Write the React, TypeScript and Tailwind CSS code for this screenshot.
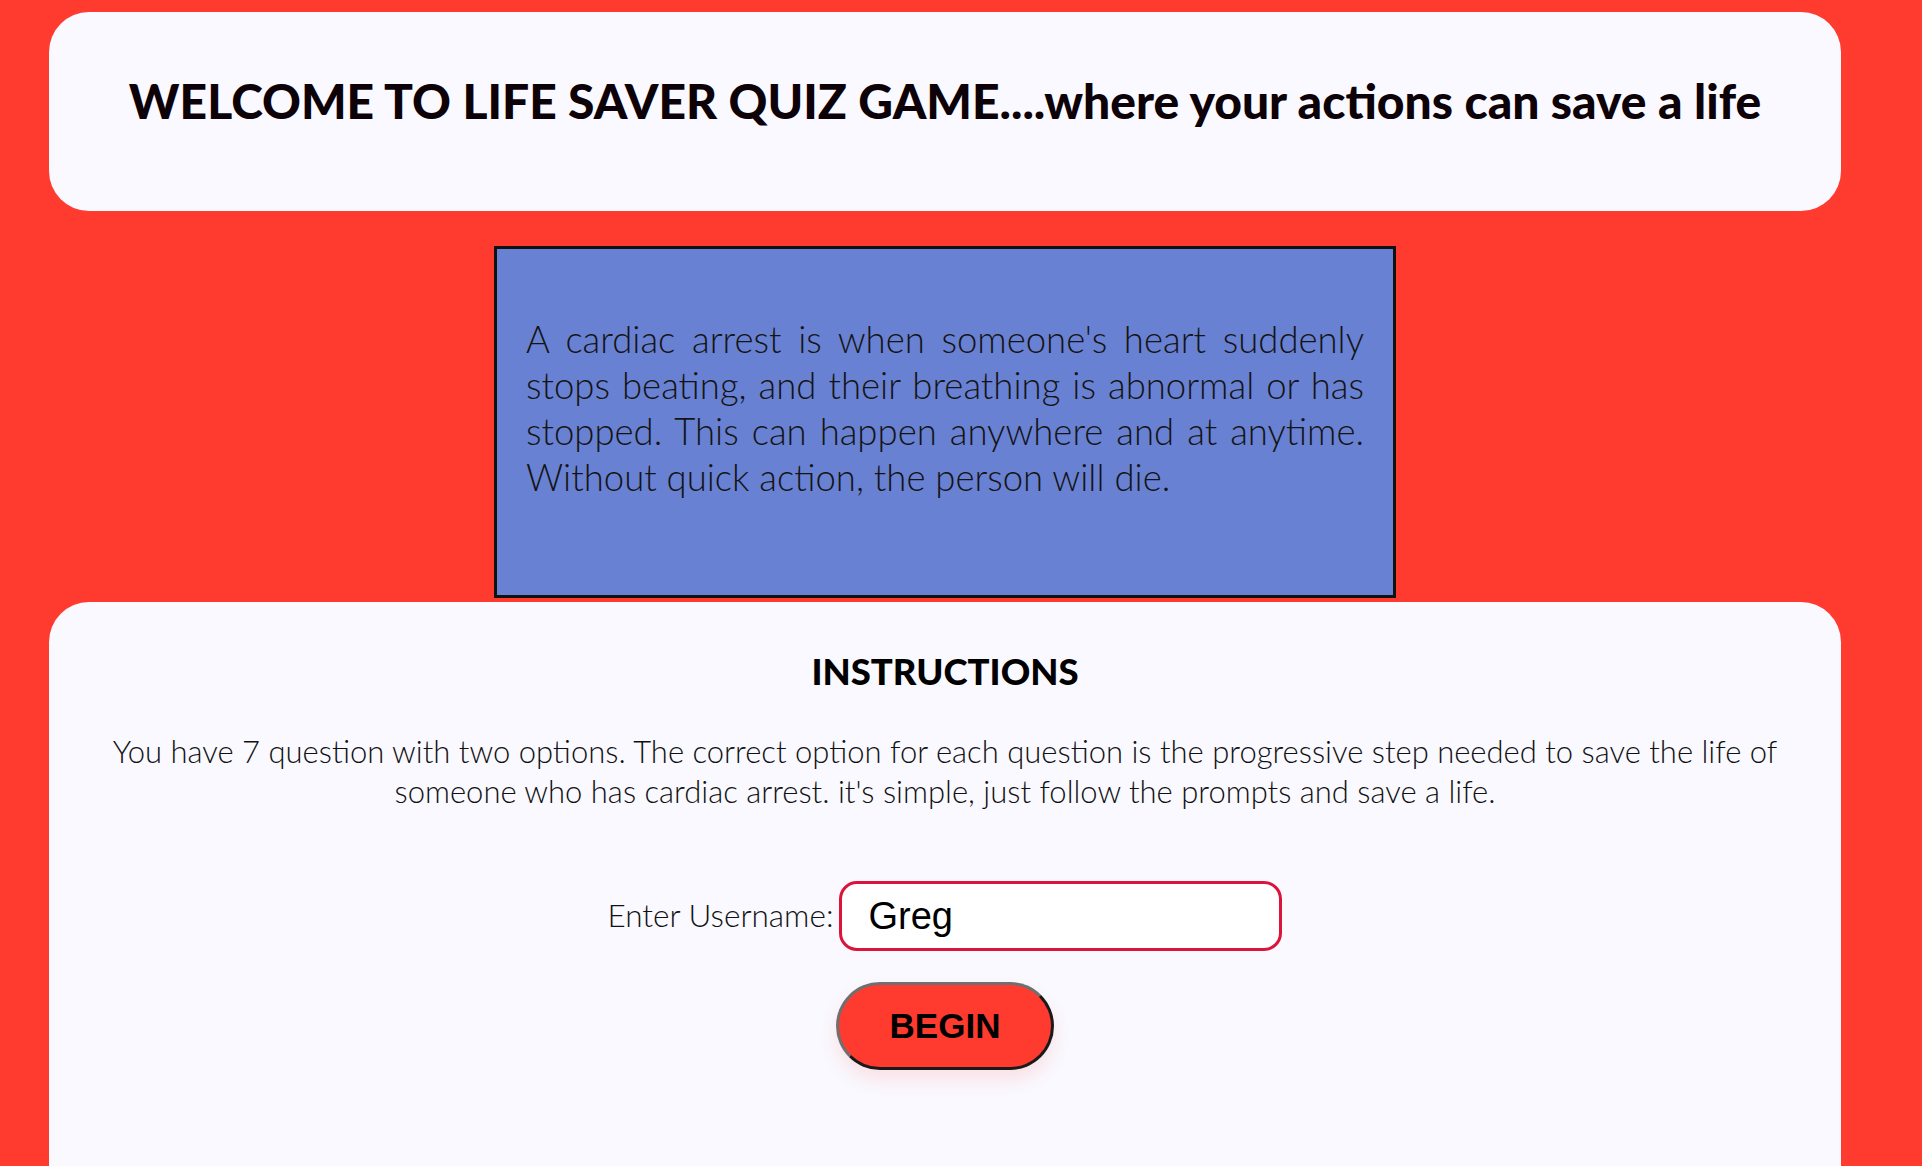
import * as React from "react";

export default function App() {
  const [name, setName] = React.useState("Greg");
  const inputRef = React.useRef<HTMLInputElement>(null);

  // focus the username field with the caret at the end
  React.useEffect(() => {
    const el = inputRef.current;
    if (el) {
      el.focus();
      el.setSelectionRange(el.value.length, el.value.length);
    }
  }, []);

  return (
    <div className="min-h-screen bg-[#ff3a2f] pt-[12px] font-['Lato','Liberation_Sans',sans-serif]">
      <div className="ml-[49px] w-[1792px]">
        {/* Header */}
        <header className="flex h-[199px] justify-center rounded-[40px] bg-[#f9f9ff] pt-[60px]">
          <h1 className="text-[48px] leading-[58px] font-black text-[#0d0208]">
            WELCOME TO LIFE SAVER QUIZ GAME....where your actions can save a life
          </h1>
        </header>

        {/* Info box */}
        <div className="mx-auto mt-[35px] h-[352px] w-[902px] border-[3px] border-[#111] bg-[#6981d3] px-[29px] pt-[67px]">
          <p className="text-justify text-[36.5px] leading-[46px] font-light text-[#141414]">
            A cardiac arrest is when someone's heart suddenly stops beating, and their breathing is abnormal or has
            stopped. This can happen anywhere and at anytime. Without quick action, the person will die.
          </p>
        </div>

        {/* Instructions */}
        <section className="mt-[4px] flex min-h-[600px] flex-col items-center rounded-t-[40px] bg-[#f9f9ff] px-[50px] pt-[49px]">
          <h2 className="text-[36.5px] leading-[40px] font-black text-black">INSTRUCTIONS</h2>
          <p className="mt-[40px] text-center text-[31px] leading-[40px] font-light text-[#111]">
            You have 7 question with two options. The correct option for each question is the progressive step needed to
            save the life of someone who has cardiac arrest. it's simple, just follow the prompts and save a life.
          </p>

          <div className="mt-[70px] flex items-center gap-[6px]">
            <label htmlFor="username" className="text-[31.5px] font-light text-[#111]">
              Enter Username:
            </label>
            <input
              id="username"
              ref={inputRef}
              value={name}
              onChange={(e) => setName(e.target.value)}
              className="h-[70px] w-[443px] rounded-[18px] border-[3px] border-[#dc143c] bg-white px-[26px] font-['Liberation_Sans',Arial,sans-serif] text-[38px] text-black outline-none"
            />
          </div>

          <button
            type="button"
            className="mt-[31px] h-[88px] w-[218px] rounded-full border-[3px] border-[#6f6f6f] [border-style:outset] bg-[#ff3a2f] font-['Liberation_Sans',Arial,sans-serif] text-[35px] font-bold text-black shadow-[0_10px_18px_rgba(255,60,50,0.12)]"
          >
            BEGIN
          </button>
        </section>
      </div>
    </div>
  );
}
